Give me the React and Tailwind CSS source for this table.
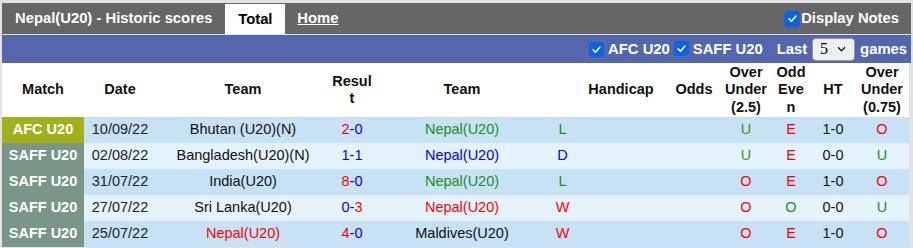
import React from "react";

const rows = [
  { comp: "AFC U20", afc: true, date: "10/09/22", home: "Bhutan (U20)(N)", homeNepal: false, hg: "2", ag: "0", away: "Nepal(U20)", res: "L", ou: "U", oe: "E", ht: "1-0", ou2: "O" },
  { comp: "SAFF U20", date: "02/08/22", home: "Bangladesh(U20)(N)", homeNepal: false, hg: "1", ag: "1", away: "Nepal(U20)", res: "D", ou: "U", oe: "E", ht: "0-0", ou2: "U" },
  { comp: "SAFF U20", date: "31/07/22", home: "India(U20)", homeNepal: false, hg: "8", ag: "0", away: "Nepal(U20)", res: "L", ou: "O", oe: "E", ht: "1-0", ou2: "O" },
  { comp: "SAFF U20", date: "27/07/22", home: "Sri Lanka(U20)", homeNepal: false, hg: "0", ag: "3", away: "Nepal(U20)", res: "W", ou: "O", oe: "O", ht: "0-0", ou2: "U" },
  { comp: "SAFF U20", date: "25/07/22", home: "Nepal(U20)", homeNepal: true, hg: "4", ag: "0", away: "Maldives(U20)", res: "W", ou: "O", oe: "E", ht: "1-0", ou2: "O" },
];

// result colours: W red, L green, D blue
const resColor = {
  W: "text-[#ff0000]",
  L: "text-[#1e8c1e]",
  D: "text-[#0000ff]",
};

const ouColor = (v) => (v === "O" ? "text-[#ff0000]" : "text-[#4d8c0a]");
const oeColor = (v) => (v === "E" ? "text-[#ff0000]" : "text-[#1e8c1e]");
const ou2Color = (v) => (v === "O" ? "text-[#ff0000]" : "text-[#1e8c1e]");

const CheckBox = ({ size = "w-[15px] h-[15px]" }) => (
  <span
    className={`${size} inline-flex items-center justify-center rounded-[3px] bg-[#0b63e0] shrink-0`}
  >
    <svg viewBox="0 0 16 16" className="w-[11px] h-[11px]">
      <path
        d="M3 8.5 L6.5 12 L13 4.5"
        fill="none"
        stroke="white"
        strokeWidth="2.2"
        strokeLinecap="round"
        strokeLinejoin="round"
      />
    </svg>
  </span>
);

const Score = ({ hg, ag }) => {
  const h = Number(hg);
  const a = Number(ag);
  return (
    <span className="text-[#0000ff]">
      <span className={h > a ? "text-[#ff0000]" : ""}>{hg}</span>-
      <span className={a > h ? "text-[#ff0000]" : ""}>{ag}</span>
    </span>
  );
};

const App = () => {
  return (
    <div
      className="w-[913px] h-[248px] bg-[#e2e2e2] pt-[3px] px-[2px] text-[#111]"
      style={{ fontFamily: '"Liberation Sans", Arial, sans-serif' }}
    >
      {/* Top bar */}
      <div className="h-[31px] bg-[#666666] flex items-stretch text-white font-bold text-[14.8px]">
        <div className="pl-[13px] pr-[13px] flex items-center">
          Nepal(U20) - Historic scores
        </div>
        <div className="w-[60px] mt-[1px] bg-white text-black flex items-center justify-center">
          Total
        </div>
        <div className="pl-[12px] flex items-center underline">Home</div>
        <div className="ml-auto pr-[12px] flex items-center gap-[1px]">
          <CheckBox size="w-[16px] h-[16px]" />
          <span>Display Notes</span>
        </div>
      </div>

      {/* Filter bar */}
      <div className="mt-[1px] h-[28px] bg-[#5466ae] flex items-center justify-end pr-[4px] text-white font-bold text-[14.8px]">
        <CheckBox />
        <span className="ml-[4px]">AFC U20</span>
        <span className="ml-[4px]">
          <CheckBox />
        </span>
        <span className="ml-[4px]">SAFF U20</span>
        <span className="ml-[14px]">Last</span>
        <span className="ml-[5px] w-[43px] h-[23px] rounded-[4px] border border-[#9a9a9a] bg-[#efefef] flex items-center justify-between pl-[7px] pr-[8px] text-black font-normal">
          <span className="text-[16px]" style={{ fontFamily: '"Liberation Serif", serif' }}>
            5
          </span>
          <svg viewBox="0 0 10 6" className="w-[9px] h-[6px]">
            <path d="M1 1 L5 5 L9 1" fill="none" stroke="#222" strokeWidth="1.6" />
          </svg>
        </span>
        <span className="ml-[5px]">games</span>
      </div>

      {/* Table */}
      <table className="table-fixed border-collapse w-[907px] text-[14.5px]">
        <colgroup>
          <col className="w-[82px]" />
          <col className="w-[72px]" />
          <col className="w-[174px]" />
          <col className="w-[44px]" />
          <col className="w-[176px]" />
          <col className="w-[25px]" />
          <col className="w-[92px]" />
          <col className="w-[54px]" />
          <col className="w-[50px]" />
          <col className="w-[40px]" />
          <col className="w-[44px]" />
          <col className="w-[54px]" />
        </colgroup>
        <thead>
          <tr className="h-[54px] bg-white font-bold leading-[17.5px] text-center">
            <th>Match</th>
            <th>Date</th>
            <th>Team</th>
            <th>
              Resul
              <br />t
            </th>
            <th>Team</th>
            <th></th>
            <th>Handicap</th>
            <th>Odds</th>
            <th>
              Over
              <br />
              Under
              <br />
              (2.5)
            </th>
            <th>
              Odd
              <br />
              Eve
              <br />n
            </th>
            <th>HT</th>
            <th>
              Over
              <br />
              Under
              <br />
              (0.75)
            </th>
          </tr>
        </thead>
        <tbody>
          {rows.map((r, i) => (
            <tr
              key={i}
              className={`h-[26px] text-center ${
                i % 2 === 0 ? "bg-[#c6e2f4]" : "bg-[#e4f3fb]"
              }`}
            >
              <td
                className={`p-0 font-bold text-white ${
                  r.afc ? "bg-[#a2b11a]" : "bg-[#7b9689]"
                }`}
              >
                {r.comp}
              </td>
              <td className="p-0 text-[#222]">{r.date}</td>
              <td className={`p-0 ${r.homeNepal ? "text-[#ff0000]" : "text-[#111]"}`}>
                {r.home}
              </td>
              <td className="p-0">
                <Score hg={r.hg} ag={r.ag} />
              </td>
              <td
                className={`p-0 ${
                  r.homeNepal ? "text-[#111]" : resColor[r.res]
                }`}
              >
                {r.away}
              </td>
              <td className={`p-0 ${resColor[r.res]}`}>{r.res}</td>
              <td className="p-0"></td>
              <td className="p-0"></td>
              <td className={`p-0 ${ouColor(r.ou)}`}>{r.ou}</td>
              <td className={`p-0 ${oeColor(r.oe)}`}>{r.oe}</td>
              <td className="p-0 text-[#111]">{r.ht}</td>
              <td className={`p-0 ${ou2Color(r.ou2)}`}>{r.ou2}</td>
            </tr>
          ))}
        </tbody>
      </table>
    </div>
  );
};

export default App;
